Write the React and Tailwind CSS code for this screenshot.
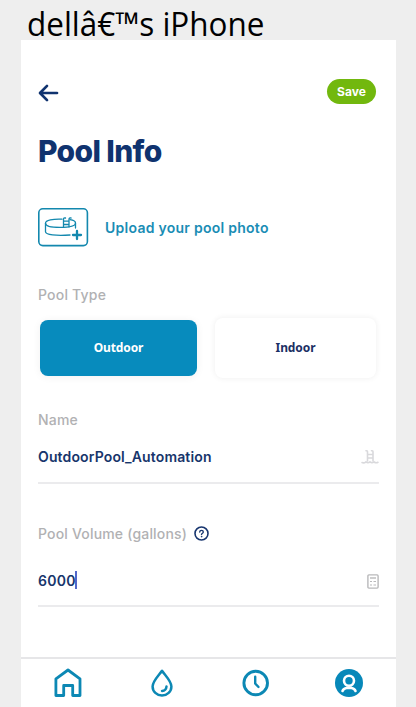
import React from "react";

function Header() {
  return (
    <div className="flex h-[25px] items-center justify-between pr-[20px] pl-[17px]">
      <svg width="22" height="20" viewBox="0 0 22 20" fill="none" stroke="#10336f" strokeWidth="2.7" strokeLinecap="round" strokeLinejoin="round" className="mt-[3px]">
        <path d="M19 10H2.3M9 2.9L2 10L9 17.1" />
      </svg>
      <button className="h-[25px] w-[49px] rounded-full bg-[#72b80e] text-[12px] font-bold text-white">
        <span className="tracking-[0.1px]">Save</span>
      </button>
    </div>
  );
}

function UploadIcon() {
  return (
    <svg width="51" height="39" viewBox="0 0 51 39" fill="none" stroke="#1388ae" strokeWidth="1.3" strokeLinecap="round">
      <rect x="0.8" y="0.8" width="48.6" height="36.8" rx="4" strokeWidth="1.6" />
      <path d="M24 11.2C15 10.8 7.5 12.2 7.5 15.2C7.5 18 13.5 19.4 22 19.4C31 19.4 37.5 18 37.5 15C37.5 13.2 35.5 12.2 32 11.7" />
      <path d="M7.5 15.2V23.8C7.5 26.8 18 28 32 27M37.5 15V20" />
      <path d="M25.5 19V11.5Q25.5 9.5 27.5 10M31 19V11.5Q31 9.5 33 10M25.5 13.2H31M25.5 16.5H31" strokeWidth="1.3" />
      <path d="M39 23V31M35 27H43" strokeWidth="2.3" />
    </svg>
  );
}

function LadderIcon() {
  return (
    <svg width="18" height="16" viewBox="0 0 18 16" fill="none" stroke="#d9d9dc" strokeWidth="1.6" strokeLinecap="round" className="mt-[2px]">
      <path d="M6.5 12V3Q6.5 1.5 5 1.7M12 12V3Q12 1.5 10.5 1.7M6.5 5.5H12M6.5 9H12" />
      <path d="M1 13.5Q3 14.5 5 12.8Q7 14.5 9 12.8Q11 14.5 13 12.8Q15 14.5 17 13.3" />
    </svg>
  );
}

function CalculatorIcon() {
  return (
    <svg width="12" height="15" viewBox="0 0 12 15" fill="none" stroke="#b9b9bb" strokeWidth="1.4" className="mt-[2px]">
      <rect x="0.9" y="0.9" width="10.2" height="13.2" rx="1" />
      <path d="M3 4H9" />
      <path d="M3 7.5H5M6.5 7.5H9M3 11H5M6.5 11H9" strokeWidth="1.2" />
    </svg>
  );
}

function HelpIcon() {
  return (
    <svg width="15" height="15" viewBox="0 0 15 15" fill="none" stroke="#18366f" strokeWidth="1.6" strokeLinecap="round">
      <circle cx="7.5" cy="7.5" r="6.5" />
      <path d="M5.7 6Q5.8 4.4 7.5 4.4Q9.3 4.4 9.3 6Q9.3 6.8 8.2 7.5Q7.5 8 7.5 8.6" strokeWidth="1.4" />
      <circle cx="7.5" cy="10.7" r="0.3" strokeWidth="1" />
    </svg>
  );
}

function BottomNav() {
  return (
    <nav className="flex h-[50px] shrink-0 items-center justify-between border-t-2 border-[#e6e6e8] pr-[33px] pl-[33px]">
      <svg width="28" height="30" viewBox="0 0 28 30" fill="none" stroke="#0c88b4" strokeWidth="2.8" strokeLinejoin="round">
        <path d="M1.9 10.8L14 2L26 10.8V27.5H18.7V17.5H9.7V27.5H1.9Z" />
      </svg>
      <svg width="28" height="30" viewBox="-2 0 28 30" fill="none" stroke="#0c88b4" strokeWidth="2.5" strokeLinecap="round" strokeLinejoin="round">
        <path d="M12 2.8C9 7.3 2.6 13.2 2.6 18.5A9.4 9.1 0 0 0 21.4 18.5C21.4 13.2 15 7.3 12 2.8Z" />
        <path d="M16.5 18.5C16.3 21 14.5 22.8 12 23" />
      </svg>
      <svg width="28" height="28" viewBox="-0.7 0 28 28" fill="none" stroke="#0c88b4" strokeWidth="2.9" strokeLinecap="round">
        <circle cx="14" cy="14" r="11.8" />
        <path d="M13.5 7.8V14.5L16.8 18" strokeWidth="2.4" />
      </svg>
      <svg width="28" height="28" viewBox="0 0 28 28" fill="none">
        <circle cx="14" cy="14" r="14" fill="#0788b9" />
        <circle cx="14" cy="11.8" r="5" stroke="white" strokeWidth="2.6" />
        <path d="M7.5 22Q8.5 19.4 11.5 19L14 18.9L16.5 19Q19.5 19.4 20.5 22" stroke="white" strokeWidth="2.6" strokeLinecap="round" />
      </svg>
    </nav>
  );
}

export default function App() {
  return (
    <div className="flex h-[707px] w-[416px] flex-col overflow-hidden bg-[#eeeeee] font-['Inter',sans-serif]">
      <div className="h-10 shrink-0 pl-[27px] font-['Open_Sans',sans-serif] text-[33px] leading-[48px] font-normal whitespace-nowrap text-black">
        <span className="inline-block origin-left scale-x-[0.953]">dellâ€™s iPhone</span>
      </div>
      <main className="ml-[21px] flex w-[375px] flex-1 flex-col bg-white pt-[39px]">
        <Header />
        <h1 className="mt-[27px] pl-[17px] text-[30px] leading-[40px] font-extrabold tracking-[-0.65px] whitespace-nowrap text-[#10336f]">
          <span>Pool Info</span>
        </h1>
        <div className="mt-[37px] flex h-[39px] items-center gap-[16px] pl-[17px]">
          <UploadIcon />
          <span className="-mt-[1px] text-[14px] font-semibold tracking-[0.26px] text-[#1a8db5]">Upload your pool photo</span>
        </div>
        <div className="mt-[38px] pl-[17px] text-[14px] leading-5 font-medium tracking-[0.2px] text-[#b1b1b3]">
          <span>Pool Type</span>
        </div>
        <div className="mt-[13px] flex h-[60px] items-center gap-[18px] pl-[19px] font-['Noto_Sans',sans-serif] text-[12px] font-bold">
          <button className="h-[56px] w-[157px] rounded-[8px] bg-[#078bbd] text-white shadow-[0_1px_8px_rgba(0,0,0,0.06)]">
            <span className="tracking-[-0.1px]">Outdoor</span>
          </button>
          <button className="h-[60px] w-[161px] rounded-[8px] bg-white text-[#1b2f63] shadow-[0_0_6px_rgba(0,0,0,0.07)]">
            <span className="tracking-[-0.1px]">Indoor</span>
          </button>
        </div>
        <section className="mx-[17px] mt-[32px] h-[74px] border-b-2 border-[#ebebed]">
          <div className="text-[14px] leading-5 font-medium tracking-[0.2px] text-[#b1b1b3]"><span>Name</span></div>
          <div className="mt-[16px] flex h-5 items-center justify-between text-[14px] font-semibold text-[#17356b]">
            <span className="tracking-[0.14px]">OutdoorPool_Automation</span>
            <LadderIcon />
          </div>
        </section>
        <section className="mx-[17px] mt-[39px] h-[84px] border-b-2 border-[#ebebed]">
          <div className="flex h-5 items-center gap-[7px] text-[14px] font-medium tracking-[0.18px] text-[#b1b1b3]">
            <span>Pool Volume (gallons)</span>
            <HelpIcon />
          </div>
          <div className="mt-[27px] flex h-5 items-center justify-between text-[14px] font-semibold text-[#17356b]">
            <div className="flex items-center">
              <span className="tracking-[0.3px]">6000</span>
              <span className="-ml-px h-[18px] w-[2px] bg-[#5267c9]" />
            </div>
            <CalculatorIcon />
          </div>
        </section>
        <div className="flex-1" />
        <BottomNav />
      </main>
    </div>
  );
}
